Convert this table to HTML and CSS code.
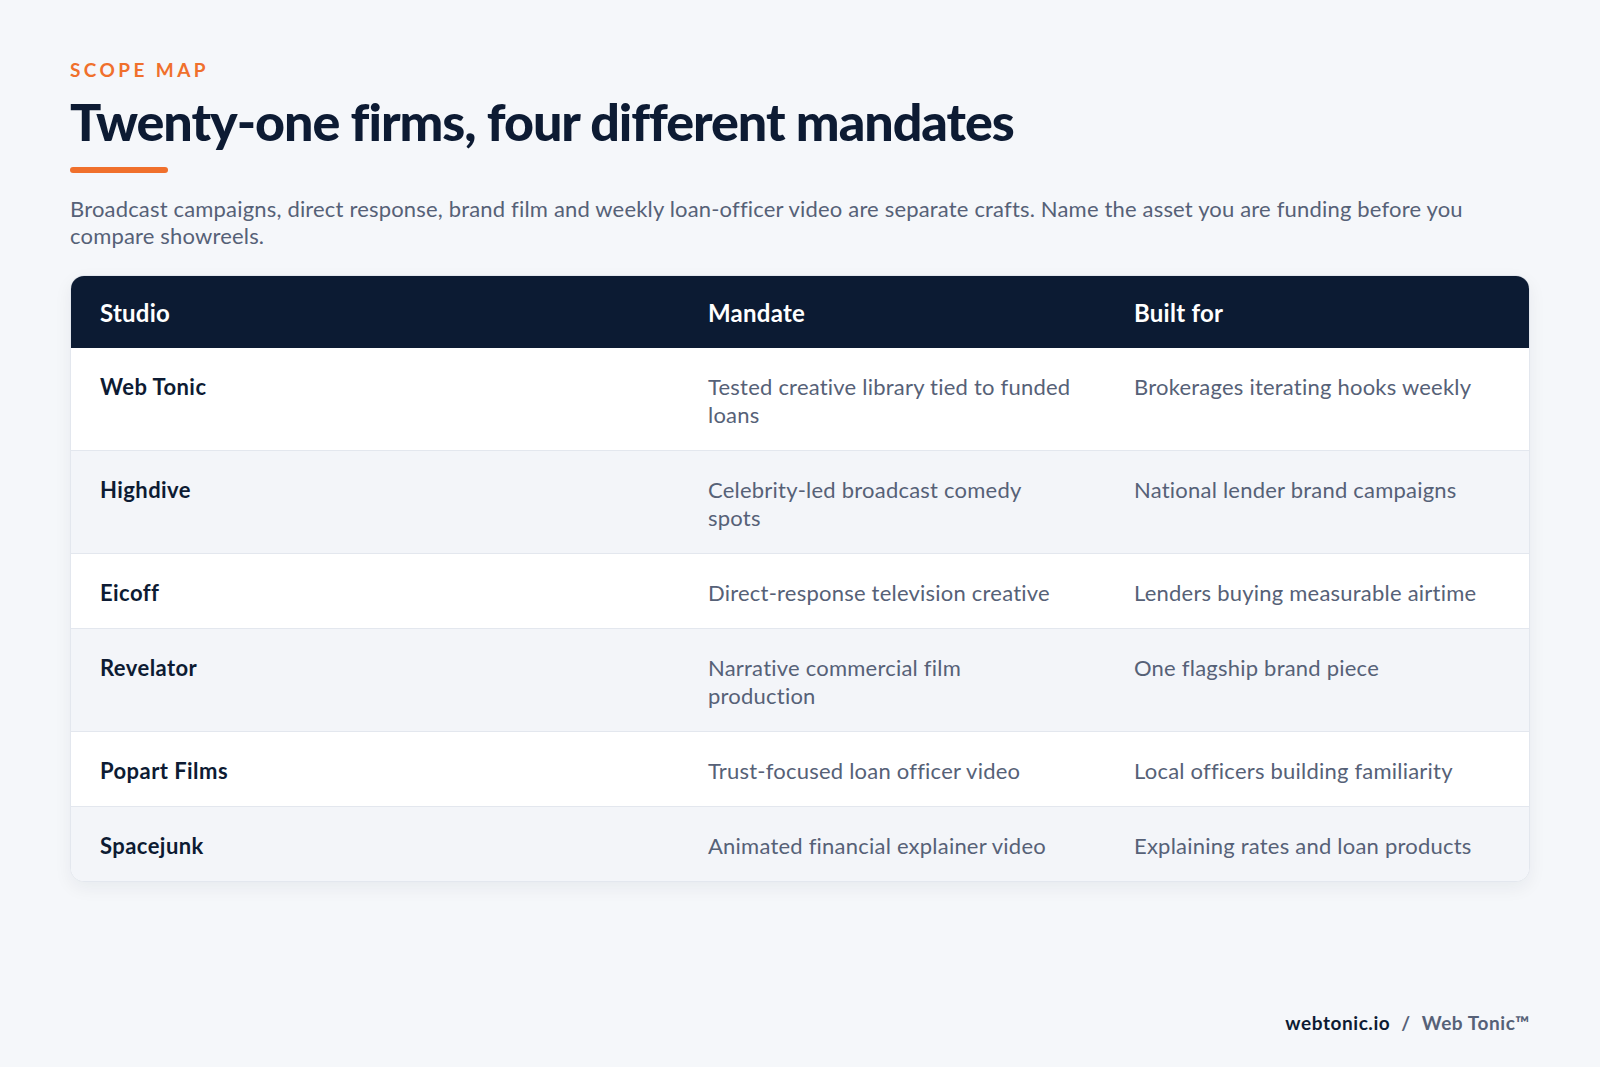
FILE: index.html
```html
<!DOCTYPE html>
<html lang="en">
<head>
<meta charset="utf-8">
<title>Scope map</title>
<link rel="stylesheet" href="styles.css">
</head>
<body>
<main class="page">
  <header class="intro">
    <div class="eyebrow">SCOPE MAP</div>
    <h1 class="title">Twenty-one firms, four different mandates</h1>
    <div class="rule"></div>
    <p class="lede">Broadcast campaigns, direct response, brand film and weekly loan-officer video are separate crafts. Name the asset you are funding before you compare showreels.</p>
  </header>
  <div class="card">
    <table class="scope">
      <thead>
        <tr><th class="c1">Studio</th><th class="c2">Mandate</th><th class="c3">Built for</th></tr>
      </thead>
      <tbody>
        <tr><td class="name">Web Tonic</td><td>Tested creative library tied to funded loans</td><td>Brokerages iterating hooks weekly</td></tr>
        <tr><td class="name">Highdive</td><td>Celebrity-led broadcast comedy spots</td><td>National lender brand campaigns</td></tr>
        <tr><td class="name">Eicoff</td><td>Direct-response television creative</td><td>Lenders buying measurable airtime</td></tr>
        <tr><td class="name">Revelator</td><td>Narrative commercial film production</td><td>One flagship brand piece</td></tr>
        <tr><td class="name">Popart Films</td><td>Trust-focused loan officer video</td><td>Local officers building familiarity</td></tr>
        <tr><td class="name">Spacejunk</td><td>Animated financial explainer video</td><td>Explaining rates and loan products</td></tr>
      </tbody>
    </table>
  </div>
  <footer class="foot">
    <span class="site">webtonic.io</span><span class="sep">/</span><span class="brand">Web Tonic™</span>
  </footer>
</main>
</body>
</html>
```
FILE: styles.css
```css
* { box-sizing: border-box; }
html, body { margin: 0; padding: 0; }
body {
  background: #f5f7fa;
  font-family: Lato, "Noto Sans", sans-serif;
  color: #0d1b33;
  width: 1600px;
  height: 1067px;
  overflow: hidden;
}
.page {
  padding: 58px 70px 0 70px;
  height: 1067px;
  display: flex;
  flex-direction: column;
}
.eyebrow {
  color: #f0702c;
  font-weight: 700;
  font-size: 19px;
  letter-spacing: 0.18em;
  line-height: 24px;
}
.title {
  margin: 7px 0 0 0;
  font-size: 52px;
  font-weight: 900;
  line-height: 64px;
  letter-spacing: -0.02em;
  color: #0d1b33;
}
.rule {
  margin-top: 14px;
  width: 98px;
  height: 6px;
  border-radius: 3px;
  background: #f0702c;
}
.lede {
  margin: 22px 0 0 0;
  max-width: 1430px;
  font-size: 22px;
  line-height: 27px;
  letter-spacing: 0.008em;
  color: #566177;
}
.card {
  margin-top: 26px;
  background: #fff;
  border: 1px solid #e3e7ee;
  border-radius: 14px;
  overflow: hidden;
  box-shadow: 0 6px 18px rgba(13, 27, 51, 0.06);
}
.scope {
  width: 100%;
  border-collapse: collapse;
  table-layout: fixed;
}
.scope th {
  background: #0c1b33;
  color: #fff;
  font-weight: 700;
  font-size: 24px;
  letter-spacing: 0.01em;
  text-align: left;
  height: 72px;
  padding: 0 33px 0 29px;
  vertical-align: middle;
}
.c1 { width: 608px; }
.c2 { width: 426px; }
.scope td {
  padding: 25px 33px 21px 29px;
  font-size: 22px;
  line-height: 28px;
  letter-spacing: 0.01em;
  color: #566177;
  vertical-align: top;
  border-top: 1px solid #e3e7ee;
}
.scope tbody tr:first-child td { border-top: none; }
.scope tbody tr:nth-child(even) td { background: #f3f5f9; }
.scope td.name {
  color: #0d1b33;
  font-weight: 700;
  letter-spacing: 0.02em;
}
.foot {
  margin-top: auto;
  margin-bottom: 33px;
  align-self: flex-end;
  font-size: 19px;
  font-weight: 700;
  letter-spacing: 0.03em;
  display: flex;
  gap: 11px;
}
.site { color: #0d1b33; }
.sep, .brand { color: #566177; }
```
